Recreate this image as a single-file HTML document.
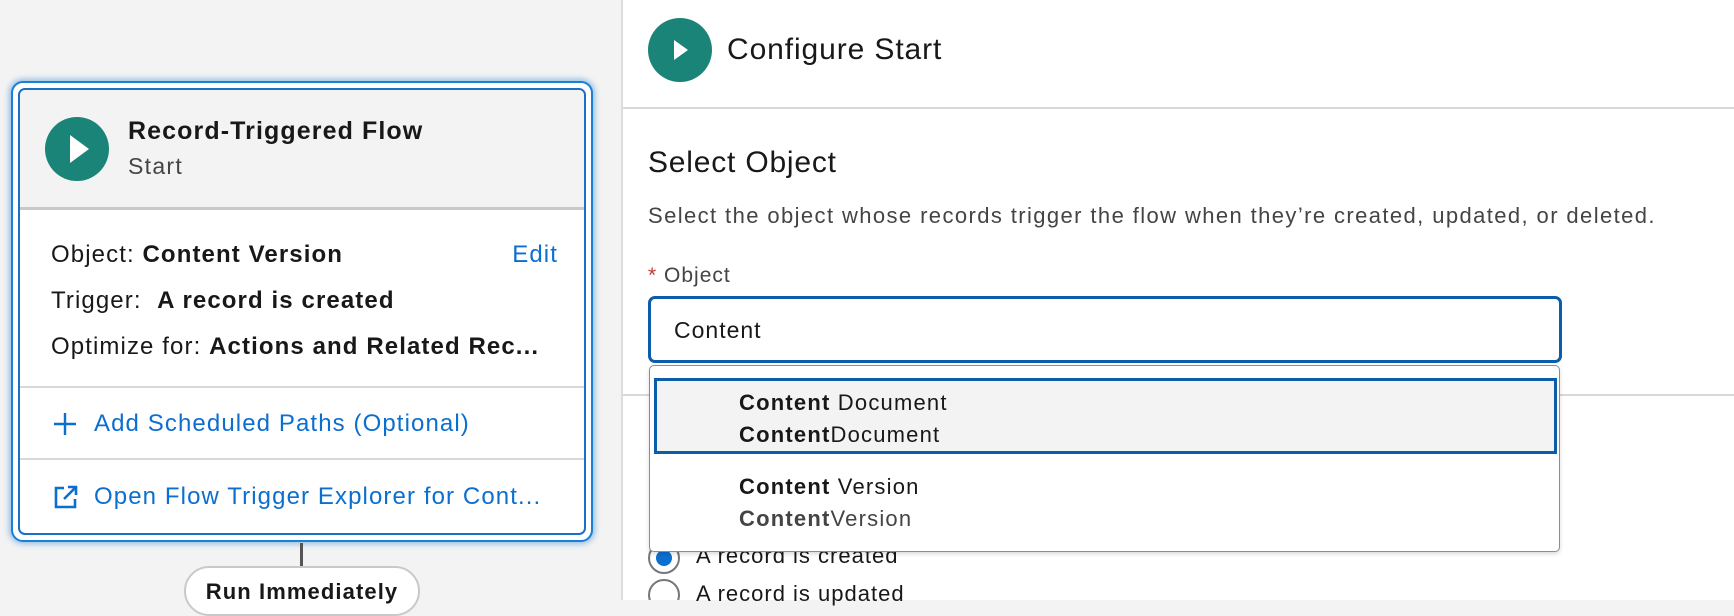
<!DOCTYPE html>
<html><head><meta charset="utf-8"><style>
*{box-sizing:border-box;margin:0;padding:0}
body{width:1734px;height:600px;overflow:hidden;position:relative;background:#f3f3f3;font-family:"Liberation Sans",Arial,sans-serif;color:#181818}
.abs{position:absolute;white-space:nowrap}
.right{position:absolute;left:621px;top:0;width:1113px;height:600px;background:#fff;border-left:2px solid #dcdcdc}
.card{position:absolute;left:11px;top:81px;width:582px;height:461px;border:2px solid #1b7fd6;border-radius:12px;box-shadow:0 0 6px 2px rgba(27,127,214,.45);background:#fff}
.inner{position:absolute;left:5px;top:5px;right:5px;bottom:5px;border:2px solid #1b6fc4;border-radius:7px;overflow:hidden;background:#fff}
.hdr{position:absolute;left:0;top:0;right:0;height:120px;background:#f3f3f3;border-bottom:3px solid #c9c9c9}
.link{color:#0b6fd0}
.div{position:absolute;left:0;right:0;height:2px;background:#d8d8d8}
.t{font-size:24px;letter-spacing:1.1px}
</style></head><body>
<div class="card"><div class="inner">
 <div class="hdr"></div>
 <svg class="abs" style="left:24px;top:26px" width="66" height="66"><circle cx="33" cy="33" r="32" fill="#1a8479"/><path d="M26 19 L45 33 L26 47 Z" fill="#fff"/></svg>
 <div class="abs" style="left:108px;top:27px;font-size:25px;letter-spacing:1.1px;font-weight:bold">Record-Triggered Flow</div>
 <div class="abs" style="left:108px;top:63px;font-size:23px;letter-spacing:1.3px;color:#444">Start</div>
 <div class="abs t" style="left:31px;top:151px">Object: <b>Content Version</b></div>
 <div class="abs link t" style="right:26px;top:151px">Edit</div>
 <div class="abs t" style="left:31px;top:197px">Trigger:&nbsp; <b>A record is created</b></div>
 <div class="abs t" style="left:31px;top:243px">Optimize for: <b>Actions and Related Rec...</b></div>
 <div class="div" style="top:296px"></div>
 <svg class="abs" style="left:32px;top:321px" width="26" height="26" stroke="#0b6fd0" stroke-width="2.4"><path d="M13 2v22M2 13h22"/></svg>
 <div class="abs link t" style="left:74px;top:320px">Add Scheduled Paths (Optional)</div>
 <div class="div" style="top:368px"></div>
 <svg class="abs" style="left:33px;top:394px" width="26" height="26" fill="none" stroke="#0b6fd0" stroke-width="2.6"><path d="M11 4H3v19h19v-8"/><path d="M11 15L23 3M15 3h8v8"/></svg>
 <div class="abs link t" style="left:74px;top:393px">Open Flow Trigger Explorer for Cont...</div>
</div></div>
<div class="abs" style="left:300px;top:543px;width:3px;height:27px;background:#555"></div>
<div class="abs" style="left:184px;top:566px;width:236px;height:50px;border:2px solid #c9c9c9;border-radius:25px;background:#fff;font-size:22px;letter-spacing:1.1px;font-weight:bold;text-align:center;padding-top:11px">Run Immediately</div>

<div class="right">
 <svg class="abs" style="left:24px;top:17px" width="66" height="66"><circle cx="33" cy="33" r="32" fill="#1a8479"/><path d="M27 23 L41 33 L27 43 Z" fill="#fff"/></svg>
 <div class="abs" style="left:104px;top:33px;font-size:30px;letter-spacing:.9px">Configure Start</div>
 <div class="abs" style="left:0;top:107px;width:1113px;height:2px;background:#d8d8d8"></div>
 <div class="abs" style="left:25px;top:146px;font-size:30px;letter-spacing:.8px">Select Object</div>
 <div class="abs" style="left:25px;top:203px;font-size:22px;letter-spacing:1.4px;color:#444">Select the object whose records trigger the flow when they’re created, updated, or deleted.</div>
 <div class="abs" style="left:25px;top:264px;font-size:21px;letter-spacing:1px;color:#444"><span style="color:#c23934">*</span> Object</div>
 <div class="abs" style="left:0;top:394px;width:1113px;height:2px;background:#d8d8d8"></div>
 <div class="abs" style="left:25px;top:296px;width:914px;height:67px;border:3px solid #0b5cab;border-radius:7px;background:#fff"></div>
 <div class="abs" style="left:51px;top:317px;font-size:23px;letter-spacing:1px">Content</div>
 <svg class="abs" style="left:20px;top:538px" width="40" height="62" fill="none" stroke="#777" stroke-width="2"><circle cx="21" cy="20" r="15"/><circle cx="21" cy="20" r="8" fill="#0b6fd0" stroke="none"/><circle cx="21" cy="57" r="15"/></svg>
 <div class="abs" style="left:73px;top:543px;font-size:22px;letter-spacing:1px">A record is created</div>
 <div class="abs" style="left:73px;top:581px;font-size:22px;letter-spacing:1px">A record is updated</div>
 <div class="abs" style="left:26px;top:365px;width:911px;height:187px;border:1.5px solid #8c8c8c;border-radius:5px;background:#fff;box-shadow:0 2px 4px rgba(0,0,0,.15)"></div>
 <div class="abs" style="left:31px;top:378px;width:903px;height:76px;border:3px solid #0b5cab;background:#f3f3f3"></div>
 <div class="abs" style="left:116px;top:387px;font-size:22px;letter-spacing:1.2px;line-height:32px"><b>Content</b> Document<br><b>Content</b>Document</div>
 <div class="abs" style="left:116px;top:471px;font-size:22px;letter-spacing:1.2px;line-height:32px"><b>Content</b> Version<br><span style="color:#444"><b>Content</b>Version</span></div>
</div>
</body></html>
